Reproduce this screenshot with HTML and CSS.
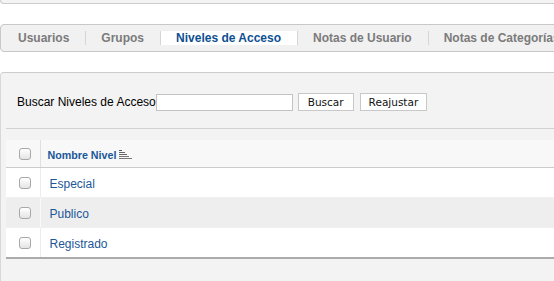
FILE: index.html
```html
<!DOCTYPE html>
<html lang="es">
<head>
    <meta charset="UTF-8">
    <meta name="viewport" content="width=device-width, initial-scale=1.0">
    <title>Niveles de Acceso</title>
    <link rel="stylesheet" href="styles.css">
</head>
<body>
    <div class="top-strip"></div>

    <ul class="tabs">
        <li class="tab">Usuarios</li>
        <li class="tab">Grupos</li>
        <li class="tab active">Niveles de Acceso</li>
        <li class="tab">Notas de Usuario</li>
        <li class="tab">Notas de Categorías</li>
    </ul>

    <div class="panel">
        <form class="filter">
            <label for="search" class="filter-label">Buscar Niveles de Acceso</label>
            <input type="text" id="search" class="filter-input">
            <button type="button" class="btn">Buscar</button>
            <button type="button" class="btn btn-reset">Reajustar</button>
        </form>

        <table class="levels">
            <thead>
                <tr>
                    <th class="col-check"><input type="checkbox" class="check"></th>
                    <th class="col-name">
                        <a href="#" class="sort-link">Nombre Nivel</a><svg class="sort-icon" width="13" height="10" viewBox="0 0 13 10">
                            <rect x="0" y="0" width="3" height="1" fill="#555"/>
                            <rect x="0" y="2" width="6" height="1" fill="#666"/>
                            <rect x="0" y="4" width="8" height="1" fill="#666"/>
                            <rect x="0" y="6" width="10" height="1" fill="#777"/>
                            <rect x="0" y="8" width="13" height="1" fill="#777"/>
                        </svg>
                    </th>
                </tr>
            </thead>
            <tbody>
                <tr class="row">
                    <td class="col-check"><input type="checkbox" class="check"></td>
                    <td class="col-name"><a href="#" class="level-link">Especial</a></td>
                </tr>
                <tr class="row row-alt">
                    <td class="col-check"><input type="checkbox" class="check"></td>
                    <td class="col-name"><a href="#" class="level-link">Publico</a></td>
                </tr>
                <tr class="row row-last">
                    <td class="col-check"><input type="checkbox" class="check"></td>
                    <td class="col-name"><a href="#" class="level-link">Registrado</a></td>
                </tr>
            </tbody>
        </table>
    </div>
</body>
</html>
```

FILE: styles.css
```css
body {
    margin: 0;
    padding: 0;
    background: #ffffff;
    font-family: "Liberation Sans", Arial, sans-serif;
    overflow: hidden;
}

.top-strip {
    height: 3px;
    margin-right: -10px;
    background: #f4f4f4;
    border-bottom: 1px solid #cccccc;
    border-left: 1px solid #cccccc;
    border-bottom-left-radius: 4px;
}

/* Tab bar */
.tabs {
    display: flex;
    list-style: none;
    margin: 20px -10px 0 0;
    padding: 6px 0 6px 2px;
    background: #f1f1f1;
    border: 1px solid #c8c8c8;
    border-radius: 4px;
}

.tab {
    padding: 0 16px 0 15px;
    line-height: 14px;
    font-size: 12px;
    font-weight: bold;
    color: #7b7b7b;
    white-space: nowrap;
}

.tab + .tab {
    border-left: 1px solid #d6d6d6;
}

.tab.active {
    background: #ffffff;
    color: #0d4f92;
}

/* Main panel */
.panel {
    margin: 20px -10px 0 0;
    padding: 0 0 0 5px;
    min-height: 208px;
    background: #f3f3f3;
    border-top: 1px solid #cccccc;
    border-left: 1px solid #d8d8d8;
    border-top-left-radius: 4px;
}

.filter {
    display: flex;
    align-items: center;
    padding: 20px 0 17px 11px;
    border-bottom: 1px solid #d2d2d2;
}

.filter-label {
    font-size: 12px;
    color: #000000;
}

.filter-input {
    box-sizing: border-box;
    width: 137px;
    height: 17px;
    margin: 0;
    padding: 1px 3px;
    border: 1px solid #c2c2c2;
    background: #ffffff;
}

.btn {
    box-sizing: border-box;
    height: 18px;
    margin: 0 0 0 5px;
    padding: 0 9px;
    background: #ffffff;
    border: 1px solid #c8c8c8;
    font-family: "DejaVu Sans", Verdana, sans-serif;
    font-size: 10.5px;
    color: #111111;
}

.btn-reset {
    margin-left: 6px;
    padding: 0 8px;
}

/* Levels table */
.levels {
    width: 100%;
    margin-top: 11px;
    border-collapse: collapse;
}

.levels th {
    height: 27px;
    padding: 0;
    background: #f8f8f8;
    border-bottom: 1px solid #cccccc;
    text-align: left;
}

.levels td {
    height: 29px;
    padding: 0;
    border-bottom: 1px solid #f0f0f0;
}

.col-check {
    width: 34px;
    padding-left: 13px !important;
    box-sizing: border-box;
    border-right: 1px solid #ececec;
}

.levels th.col-check {
    border-right-color: #e0e0e0;
}

.levels th.col-name {
    padding-left: 7px;
}

.levels td.col-name {
    padding-left: 9px;
}

.row {
    background: #ffffff;
}

.row-alt {
    background: #eeeeee;
}

.row-alt .col-check {
    border-right-color: #f9f9f9;
}

.row-last td {
    border-bottom: 2px solid #ababab;
}

.check {
    appearance: none;
    -webkit-appearance: none;
    display: block;
    width: 12px;
    height: 12px;
    margin: 0;
    border: 1px solid #a8a8a8;
    border-radius: 3px;
    background: linear-gradient(to bottom, #ffffff, #e4e4e4);
}

.sort-link {
    font-size: 10.7px;
    font-weight: bold;
    color: #17579a;
    text-decoration: none;
}

.sort-icon {
    margin-left: 3px;
    vertical-align: -1px;
}

.level-link {
    font-size: 12px;
    color: #1b5897;
    text-decoration: none;
}
```
